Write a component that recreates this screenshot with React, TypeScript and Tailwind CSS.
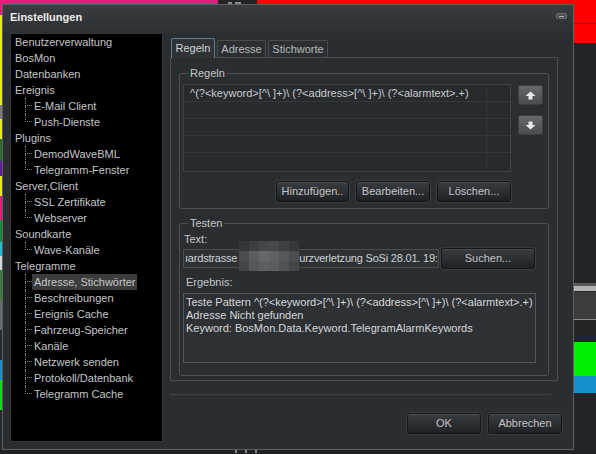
import React from "react";

interface TreeNode {
    label: string;
    children?: string[];
}

const tree: TreeNode[] = [
    { label: "Benutzerverwaltung" },
    { label: "BosMon" },
    { label: "Datenbanken" },
    { label: "Ereignis", children: ["E-Mail Client", "Push-Dienste"] },
    { label: "Plugins", children: ["DemodWaveBML", "Telegramm-Fenster"] },
    { label: "Server,Client", children: ["SSL Zertifikate", "Webserver"] },
    { label: "Soundkarte", children: ["Wave-Kanäle"] },
    {
        label: "Telegramme",
        children: [
            "Adresse, Stichwörter",
            "Beschreibungen",
            "Ereignis Cache",
            "Fahrzeug-Speicher",
            "Kanäle",
            "Netzwerk senden",
            "Protokoll/Datenbank",
            "Telegramm Cache",
        ],
    },
];

const leftStrip = [
    ["h-[11px]", "bg-[#e0207a]"],
    ["h-[90px]", "bg-[#e8e820]"],
    ["h-[14px]", "bg-[#7a7a7a]"],
    ["h-[20px]", "bg-[#e8e820]"],
    ["h-[22px]", "bg-[#2a6a2a]"],
    ["h-[15px]", "bg-[#6a1aa0]"],
    ["h-[20px]", "bg-[#e8e820]"],
    ["h-[24px]", "bg-[#e0207a]"],
    ["h-[22px]", "bg-[#1a8a3a]"],
    ["h-[14px]", "bg-[#20c0d0]"],
    ["h-[14px]", "bg-[#d8d8d8]"],
    ["h-[30px]", "bg-[#3a7a3a]"],
    ["h-[30px]", "bg-[#6a6a6a]"],
    ["h-[30px]", "bg-[#2a2a2a]"],
    ["h-[20px]", "bg-[#1890d0]"],
    ["h-[30px]", "bg-[#10e010]"],
    ["h-[39px]", "bg-[#2a2a2a]"],
];

// pixelated redaction over the text field
const mosaic = [
    ["bg-[#34373a]", "bg-[#3c3f42]", "bg-[#45484b]", "bg-[#474a4d]", "bg-[#3e4144]", "bg-[#36393c]"],
    ["bg-[#4a4d50]", "bg-[#5a5d60]", "bg-[#65686b]", "bg-[#5f6265]", "bg-[#56595c]", "bg-[#4b4e51]"],
    ["bg-[#44474a]", "bg-[#55585b]", "bg-[#5c5f62]", "bg-[#5a5d60]", "bg-[#505356]", "bg-[#45484b]"],
];

const Btn = ({ children, className = "" }: { children: React.ReactNode; className?: string }) => (
    <div
        className={`flex items-center justify-center rounded-[3px] border border-[#141618] bg-linear-to-b from-[#3a3d40] to-[#1f2225] text-[#c2c4c6] shadow-[inset_0_1px_0_#4b4e51,0_0_0_1px_#3a3d40] ${className}`}
    >
        {children}
    </div>
);

const Arrow = ({ down = false }: { down?: boolean }) => (
    <svg width="11" height="9" viewBox="0 0 11 9" className={down ? "rotate-180" : ""}>
        <path d="M5.5 0.5 L10.5 5 L7.5 5 L7.5 8.5 L3.5 8.5 L3.5 5 L0.5 5 Z" fill="#e6e8ea" />
    </svg>
);

const Tab = ({ label, width, active = false }: { label: string; width: string; active?: boolean }) => (
    <div
        className={
            active
                ? `relative z-10 -mb-px flex h-[20px] items-center justify-center rounded-t-[2px] border border-b-0 border-[#5c7f94] bg-[#2f3336] text-[#d2d4d6] ${width}`
                : `flex h-[17px] items-center justify-center rounded-t-[2px] border border-b-0 border-[#4a4d50] bg-[#2c2f32] text-[#b8babc] ${width}`
        }
    >
        {label}
    </div>
);

export default function App() {
    const rule = "^(?<keyword>[^\\ ]+)\\ (?<address>[^\\ ]+)\\ (?<alarmtext>.+)";
    return (
        <div className="flex h-[454px] w-[596px] flex-col overflow-hidden bg-[#1f2124] font-['Liberation_Sans',Arial,sans-serif] text-[11px] text-[#c4c6c8]">
            {/* desktop behind the window */}
            <div className="flex h-[4px]">
                <div className="w-[218px] bg-[#e0207a]" />
                <div className="flex w-[39px] items-end gap-[3px] bg-[#222426] px-[10px]">
                    <div className="h-[2px] w-[4px] bg-[#8a8a8a]" />
                    <div className="h-[2px] w-[6px] bg-[#8a8a8a]" />
                </div>
                <div className="flex-1 bg-[#ff0000]" />
            </div>
            <div className="flex h-[446px]">
                <div className="flex w-[2px] flex-col">
                    {leftStrip.map(([h, c], i) => (
                        <div key={i} className={`${h} ${c}`} />
                    ))}
                </div>

                {/* dialog */}
                <div className="flex w-[572px] flex-col border border-[#5e6164] bg-[#2b2e31]">
                    <div className="flex h-[28px] items-start justify-between bg-linear-to-b from-[#3a3d40] to-[#2d3033]">
                        <div className="pl-[7px] pt-[5px] text-[11px] font-bold leading-[14px] text-[#ececec]">Einstellungen</div>
                        <div className="mr-[6px] mt-[8px] flex h-[6px] w-[11px] items-center justify-center rounded-[2px] border border-[#6a6d70] bg-[#4e5154]">
                            <div className="h-px w-[5px] bg-[#b0b2b4]" />
                        </div>
                    </div>

                    <div className="flex pl-[7px]">
                        {/* tree */}
                        <div className="h-[409px] w-[153px] border border-[#34373a] bg-black text-[#c4c6c8]">
                            {tree.map((node) => (
                                <div key={node.label}>
                                    <div className="h-4 pl-[4px] leading-4">{node.label}</div>
                                    {node.children?.map((child, i) => {
                                        const last = i === node.children!.length - 1;
                                        const selected = child === "Adresse, Stichwörter";
                                        return (
                                            <div key={child} className="flex h-4 pl-[14px]">
                                                <div className="flex w-[7px] flex-col">
                                                    <div className="h-[8px] border-b border-l border-dotted border-[#7c7c7c]" />
                                                    {!last && <div className="h-[8px] border-l border-dotted border-[#7c7c7c]" />}
                                                </div>
                                                <span className={`px-[2px] leading-4 ${selected ? "bg-[#3c3c3c]" : ""}`}>{child}</span>
                                            </div>
                                        );
                                    })}
                                </div>
                            ))}
                        </div>

                        {/* right side */}
                        <div className="ml-[7px] flex w-[392px] flex-col">
                            <div className="mt-[5px] flex h-[19px] items-end gap-[2px] pl-[1px]">
                                <Tab label="Regeln" width="w-[44px]" active />
                                <Tab label="Adresse" width="w-[49px]" />
                                <Tab label="Stichworte" width="w-[60px]" />
                            </div>
                            <div className="flex h-[324px] w-[388px] flex-col border border-[#4a4d50] bg-[#2b2e31]">
                                <fieldset className="mx-[8px] mt-[9px] rounded-[3px] border border-[#4c4f52] px-[3px] pb-[6px] pt-[4px]">
                                    <legend className="ml-[5px] px-[2px] leading-[13px]">Regeln</legend>
                                    <div className="flex">
                                        <div className="h-[88px] w-[328px] border border-[#3e4144] bg-[#282b2e]">
                                            {[0, 1, 2, 3, 4].map((r) => (
                                                <div key={r} className={`flex h-[17px] ${r < 4 ? "border-b border-[#34373a]" : ""}`}>
                                                    <div className="w-[303px] truncate border-r border-[#34373a] pl-[6px] pt-[2px] leading-[13px] text-[#c8cacc]">
                                                        {r === 0 ? rule : ""}
                                                    </div>
                                                </div>
                                            ))}
                                        </div>
                                        <div className="ml-[7px] mt-[1px] flex flex-col gap-[10px]">
                                            <div className="flex h-[20px] w-[25px] items-center justify-center rounded-[2px] border border-[#3c3f42] bg-linear-to-b from-[#66696c] to-[#4a4d50]">
                                                <Arrow />
                                            </div>
                                            <div className="flex h-[20px] w-[25px] items-center justify-center rounded-[2px] border border-[#3c3f42] bg-linear-to-b from-[#66696c] to-[#4a4d50]">
                                                <Arrow down />
                                            </div>
                                        </div>
                                    </div>
                                    <div className="mt-[9px] flex w-[328px] justify-end gap-[7px]">
                                        <Btn className="h-[21px] w-[73px]">Hinzufügen..</Btn>
                                        <Btn className="h-[21px] w-[74px]">Bearbeiten...</Btn>
                                        <Btn className="h-[21px] w-[74px]">Löschen...</Btn>
                                    </div>
                                </fieldset>

                                <fieldset className="mx-[8px] mt-[8px] rounded-[3px] border border-[#4c4f52] px-[3px] pb-[12px]">
                                    <legend className="ml-[5px] px-[2px] leading-[13px]">Testen</legend>
                                    <div className="mt-[3px] pl-[1px] leading-[13px]">Text:</div>
                                    <div className="mt-[2px] flex items-center">
                                        <div className="relative h-[19px] w-[256px] border border-[#4a4d50] bg-[#2e3134]">
                                            <div className="flex h-full items-center overflow-hidden whitespace-nowrap pl-[1px] tracking-[-0.2px] text-[#cfd1d3]">
                                                <span>ıardstrasse</span>
                                                <span className="ml-[4px] w-[58px] shrink-0" />
                                                <span>urzverletzung SoSi 28.01. 19:</span>
                                            </div>
                                            <div className="absolute left-[55px] top-[-9px] grid w-[60px] grid-cols-6">
                                                {mosaic.flat().map((c, i) => (
                                                    <div key={i} className={`h-[10px] ${c}`} />
                                                ))}
                                            </div>
                                        </div>
                                        <Btn className="ml-[2px] h-[21px] w-[94px]">Suchen...</Btn>
                                    </div>
                                    <div className="mt-[7px] pl-[3px] leading-[13px]">Ergebnis:</div>
                                    <div className="mt-[4px] h-[70px] w-[353px] border border-[#55585b] bg-[#2e3134] px-[2px] pt-[2px] leading-[13px] text-[#d6d8da]">
                                        <div className="whitespace-nowrap">Teste Pattern {rule}</div>
                                        <div>Adresse Nicht gefunden</div>
                                        <div>Keyword: BosMon.Data.Keyword.TelegramAlarmKeywords</div>
                                    </div>
                                </fieldset>
                            </div>
                            <div className="mt-[13px] h-px w-[381px] bg-[#3f4245] shadow-[0_1px_0_#313437]" />
                            <div className="mt-[18px] flex justify-end gap-[7px]">
                                <Btn className="h-[21px] w-[74px]">OK</Btn>
                                <Btn className="h-[21px] w-[74px]">Abbrechen</Btn>
                            </div>
                        </div>
                    </div>
                </div>

                <div className="flex flex-1 flex-col">
                    <div className="h-[19px] bg-[#ff0000]" />
                    <div className="h-px bg-[#b00000]" />
                    <div className="h-[19px] bg-[#ff0000]" />
                    <div className="h-[240px] bg-[#222528]" />
                    <div className="h-[3px] bg-[#5a5a5a]" />
                    <div className="h-[5px] bg-[#b4b4b4]" />
                    <div className="h-px bg-[#2a2a2a]" />
                    <div className="h-[27px] bg-[#3c3c3c]" />
                    <div className="h-px bg-[#8a8a8a]" />
                    <div className="h-[22px] bg-[#252525]" />
                    <div className="h-[34px] bg-[#00ee00]" />
                    <div className="h-[17px] bg-[#1890d0]" />
                    <div className="flex-1 bg-[#222528]" />
                </div>
            </div>
            <div className="flex h-[4px] bg-[#1f2124]">
                <div className="ml-[235px] h-[3px] w-[2px] bg-[#8a8a8a]" />
                <div className="ml-[8px] h-[3px] w-[2px] bg-[#8a8a8a]" />
                <div className="ml-[8px] h-[3px] w-[2px] bg-[#8a8a8a]" />
            </div>
        </div>
    );
}
